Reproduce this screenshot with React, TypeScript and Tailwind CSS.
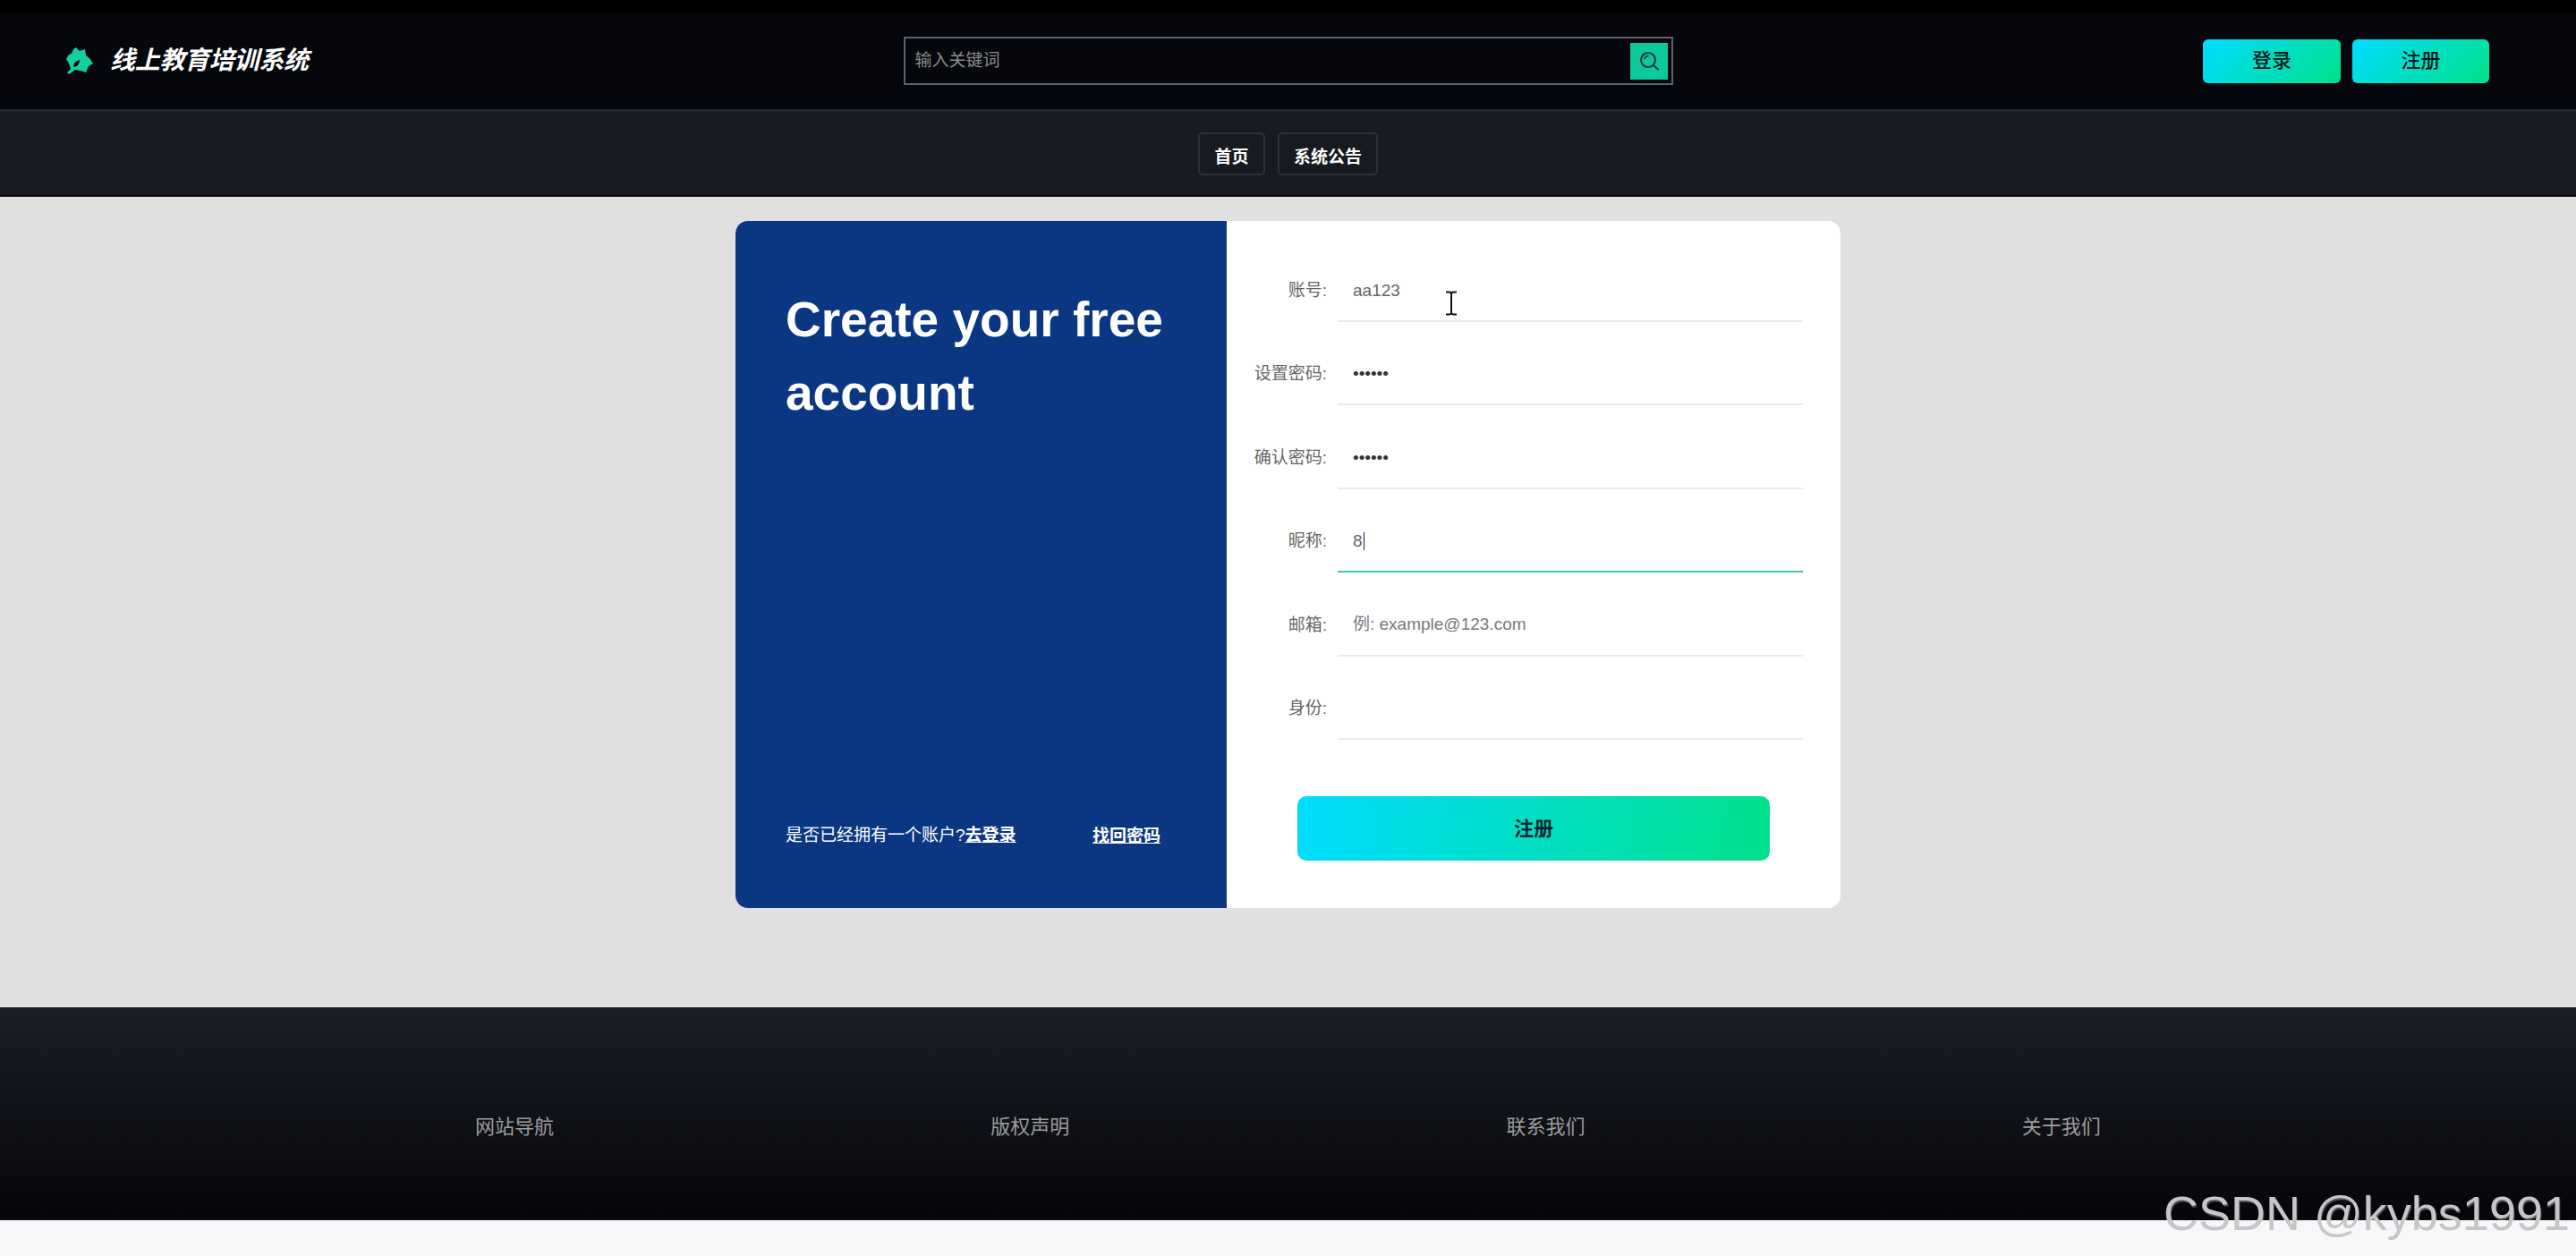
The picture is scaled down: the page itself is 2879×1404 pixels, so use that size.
const font = "font-['Liberation_Sans','Noto_Sans_CJK_SC',sans-serif]";

const fields = [
  { label: '账号:', value: 'aa123', type: 'text' },
  { label: '设置密码:', value: '••••••', type: 'password' },
  { label: '确认密码:', value: '••••••', type: 'password' },
  { label: '昵称:', value: '8', type: 'active' },
  { label: '邮箱:', value: '例: example@123.com', type: 'placeholder' },
  { label: '身份:', value: '', type: 'text' },
];

function Leaf() {
  return (
    <svg viewBox="0 0 30 30" className="w-[30px] h-[30px]">
      <path
        fill="#14cf9f"
        fillRule="evenodd"
        d="M11 0 L15 4 L21 2 L22 9 L26 12 L30 18 L25 21 L22 28 L16 26 L10 25 L6 28 L3 30 L1 28 L5 24 L3 18 L0 13 L3 8 L6 7 L8 2 Z M8 22 Q8 16 15 14 Q15 21 8 22 Z"
      />
    </svg>
  );
}

function SearchGlyph() {
  return (
    <svg viewBox="0 0 24 24" className="w-[24px] h-[24px]" fill="none" stroke="#0b3a3c" strokeWidth="2.200" strokeLinecap="round">
      <circle cx="11" cy="11" r="8" />
      <path d="M7 9.500a4.500 4.500 0 0 1 4-3" strokeWidth="1.500" />
      <path d="M17 17l5 4.500" />
    </svg>
  );
}

function IBeam() {
  return (
    <svg viewBox="0 0 14 28" className="absolute left-[1615px] top-[325px] w-[14px] h-[28px]">
      <path d="M1 1.500h4l2 1 2-1h4M7 2.500v23M1 26.500h4l2-1 2 1h4" fill="none" stroke="#111" strokeWidth="2" />
    </svg>
  );
}

export default function App() {
  return (
    <div className={`relative w-[2879px] h-[1404px] overflow-hidden flex flex-col bg-[#f6f7f9] ${font}`}>
      <div className="h-[14px] bg-black shrink-0" />

      {/* header */}
      <header className="h-[108px] shrink-0 bg-[#05070d] grid grid-cols-[1fr_860px_1fr] items-center">
        <div className="flex items-center pl-[74px] gap-[19px]">
          <Leaf />
          <span className="text-[28px] font-bold italic text-white leading-none tracking-[-0.3px]">线上教育培训系统</span>
        </div>
        <div className="h-[54px] border-2 border-[#5f626b] flex items-center justify-between pl-[11px] pr-[4px]">
          <span className="text-[19px] text-[#8b8b8b] pt-[1px]">输入关键词</span>
          <button className="w-[42px] h-[41px] bg-[#0bc99b] flex items-center justify-center">
            <SearchGlyph />
          </button>
        </div>
        <div className="flex justify-end pr-[97px] gap-[13px]">
          <button className="w-[154px] h-[49px] pb-[2px] rounded-[6px] bg-[linear-gradient(135deg,#00dcff,#00e18a)] text-[22px] font-medium text-[#06181c]">
            登录
          </button>
          <button className="w-[153px] h-[49px] pb-[2px] rounded-[6px] bg-[linear-gradient(135deg,#00dcff,#00e18a)] text-[22px] font-medium text-[#06181c]">
            注册
          </button>
        </div>
      </header>

      {/* nav */}
      <nav className="h-[98px] shrink-0 bg-[#171a21] border-t-[3px] border-t-[#23262e] border-b-2 border-b-[#08090d] flex items-center justify-center gap-[14px]">
        <a className="w-[75px] h-[48px] pt-[9px] rounded-[5px] border-2 border-[#2e3138] flex items-center justify-center text-[19px] font-bold text-white">
          首页
        </a>
        <a className="w-[112px] h-[48px] pt-[9px] rounded-[5px] border-2 border-[#2e3138] flex items-center justify-center text-[19px] font-bold text-white">
          系统公告
        </a>
      </nav>

      {/* register card */}
      <main className="h-[906px] shrink-0 bg-[#e0e0e0] pt-[27px]">
        <div className="w-[1235px] h-[768px] ml-[822px] flex rounded-[14px] overflow-hidden bg-white">
          <div className="w-[549px] bg-[#0b3782] pl-[56px] pr-[74px] flex flex-col justify-between">
            <h1 className="mt-[69px] text-[55px] leading-[82px] font-bold text-white whitespace-nowrap">
              Create your free
              <br />
              account
            </h1>
            <div className="mb-[66px] flex items-center justify-between text-[19px] text-white">
              <span>
                是否已经拥有一个账户?<a className="font-bold underline">去登录</a>
              </span>
              <a className="font-bold underline mt-[1px]">找回密码</a>
            </div>
          </div>

          <form className="flex-1 pt-[43px]">
            {fields.map((f) => (
              <div key={f.label} className="flex h-[93.400px]">
                <label className="w-[112px] pt-[24px] text-right text-[19px] leading-[22px] text-[#666]">{f.label}</label>
                <div
                  className={`ml-[12px] w-[520px] h-[70px] pt-[2px] flex items-center pl-[17px] text-[19px] ${
                    f.type === 'active' ? 'border-b-2 border-[#3cc9a7]' : 'border-b-2 border-[#e8eaec]'
                  } ${f.type === 'placeholder' ? 'text-[#75787d]' : 'text-[#666]'}`}
                >
                  {f.type === 'password' ? <span className="text-[#333]">{f.value}</span> : <span>{f.value}</span>}
                  {f.type === 'active' && <span className="ml-[1px] w-[1px] h-[20px] bg-[#222]" />}
                </div>
              </div>
            ))}
            <button
              type="button"
              className="ml-[79px] mt-[40px] w-[528px] h-[72px] rounded-[10px] bg-[linear-gradient(100deg,#00dcff,#00e18a)] text-[22px] font-bold text-[#06262c]"
            >
              注册
            </button>
          </form>
        </div>
      </main>

      {/* footer */}
      <footer className="h-[238px] shrink-0 bg-[linear-gradient(#1b1e26,#05060b)] px-[287px] pt-[28px] grid grid-cols-4 items-center text-center text-[22px] text-[#9c9c9c]">
        <a>网站导航</a>
        <a>版权声明</a>
        <a>联系我们</a>
        <a>关于我们</a>
      </footer>

      <IBeam />
      <div className="absolute right-[7px] top-[1328px] text-[54px] leading-[56px] text-[#c6c6c6] [text-shadow:1px_2px_1px_rgba(255,255,255,0.3)] font-['Liberation_Sans',sans-serif]">
        CSDN @kybs1991
      </div>
    </div>
  );
}
